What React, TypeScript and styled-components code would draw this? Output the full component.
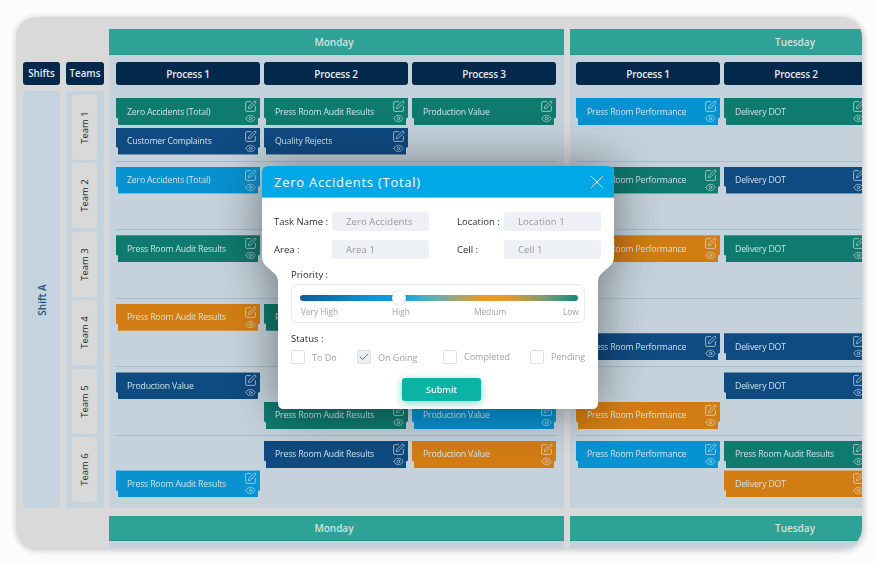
import React from 'react';
import styled, { createGlobalStyle } from 'styled-components';
import { Check, Eye, SquarePen, X } from 'lucide-react';

const GlobalStyle = createGlobalStyle`
  html, body {
    margin: 0;
    background: #fcfcfc;
    font-family: 'Open Sans', 'Noto Sans', sans-serif;
  }
`;

type Tone = 'teal' | 'navy' | 'blue' | 'orange';

const tones: Record<Tone, string> = {
  teal: '#0f7a6e',
  navy: '#0f4a80',
  blue: '#0792d0',
  orange: '#d27d14',
};

const Page = styled.div`
  width: 878px;
  height: 566px;
  padding: 17px 0 0 16px;
  box-sizing: border-box;
  overflow: hidden;
`;

const Frame = styled.div`
  position: relative;
  width: 846px;
  height: 531px;
  background: #d9d9d9;
  border-radius: 20px;
  box-shadow: 0 0 5px 2px rgba(0, 0, 0, 0.08), 2px 3px 7px rgba(0, 0, 0, 0.14);
`;

const Clip = styled.div`
  position: absolute;
  inset: 0;
  display: flex;
  gap: 5px;
  padding: 12px 0 0 7px;
  border-radius: 20px;
  overflow: hidden;
`;

const Sidebar = styled.div`
  flex: none;
  display: flex;
  gap: 6px;
  padding-top: 33px;
`;

const SideColumn = styled.div<{ $width: number }>`
  width: ${p => p.$width}px;
  display: flex;
  flex-direction: column;
  gap: 6px;
`;

const SideHead = styled.div`
  height: 23px;
  display: flex;
  align-items: center;
  justify-content: center;
  border-radius: 3px;
  background: #02284c;
  color: #e6ebef;
  font-size: 9.8px;
  font-weight: 600;
`;

const ShiftBody = styled.div`
  height: 417px;
  display: flex;
  align-items: center;
  justify-content: center;
  border-radius: 3px;
  background: #c5d3de;
  color: #1d4f7c;
  font-size: 10px;
  font-weight: 600;
`;

const Vertical = styled.span`
  transform: rotate(-90deg);
  white-space: nowrap;
`;

const TeamBody = styled.div`
  height: 417px;
  display: flex;
  flex-direction: column;
  gap: 3.4px;
  padding: 4px 7px 0 6px;
  box-sizing: border-box;
  border-radius: 3px;
  background: #c5d3de;
`;

const TeamBox = styled.div`
  height: 65px;
  flex: none;
  display: flex;
  align-items: center;
  justify-content: center;
  border-radius: 3px;
  background: #d9d9d9;
  color: #262626;
  font-size: 9.5px;
`;

const Days = styled.div`
  display: flex;
  gap: 6px;
`;

const DayColumn = styled.div`
  width: 455px;
  flex: none;
  display: flex;
  flex-direction: column;
`;

const DayHead = styled.div<{ $height: number }>`
  height: ${p => p.$height}px;
  flex: none;
  display: flex;
  align-items: center;
  justify-content: center;
  padding-right: 5px;
  background: #2ea297;
  border-bottom: 1px solid #2a9389;
  box-sizing: border-box;
  color: #cfe3df;
  font-size: 10px;
  font-weight: 600;
`;

const DayBody = styled.div<{ $inset: number }>`
  height: 453px;
  flex: none;
  padding: 7px 8px 0 ${p => p.$inset}px;
  box-sizing: border-box;
  background: #c5d2db;
`;

const DayFootGap = styled.div`
  height: 8px;
  flex: none;
`;

const DaySliver = styled.div`
  height: 8px;
  flex: none;
  background: #c5d2db;
`;

const Cols = styled.div`
  display: grid;
  grid-template-columns: repeat(3, 144px);
  column-gap: 4px;
`;

const ProcessHead = styled.div`
  height: 23px;
  display: flex;
  align-items: center;
  justify-content: center;
  border-radius: 3px;
  background: #02284c;
  color: #e6ebef;
  font-size: 10px;
  font-weight: 600;
  letter-spacing: -0.2px;
`;

const Rows = styled.div`
  margin-top: 8px;
`;

const Row = styled(Cols)`
  height: 68.6px;
  box-sizing: border-box;
  padding-top: 5px;
  border-bottom: 1px solid #a9bccb;

  &:last-child {
    border-bottom: none;
  }
`;

const Cell = styled.div`
  display: flex;
  flex-direction: column;
  gap: 2.5px;
`;

const Slot = styled.div`
  height: 27px;
  flex: none;
`;

const CardEdge = styled.div`
  height: 27px;
  flex: none;
  filter: drop-shadow(0 0 0.6px #e4eaee);
`;

const CardBody = styled.div<{ $tone: Tone }>`
  height: 100%;
  display: flex;
  align-items: center;
  justify-content: space-between;
  padding: 0 3px 0 11px;
  background: ${p => tones[p.$tone]};
  clip-path: polygon(0 0, 100% 0, 100% 72%, calc(100% - 2px) 76%, calc(100% - 2px) 100%, 2px 100%, 2px 76%, 0 72%);
  color: #cfe2ea;
  font-size: 8.7px;
  letter-spacing: -0.17px;
`;

const CardIcons = styled.div`
  display: flex;
  flex-direction: column;
  align-items: center;
  margin-top: 1px;
  color: #d5e3ea;
`;

const ModalShadow = styled.div`
  position: absolute;
  left: 246px;
  top: 149px;
  width: 352px;
  height: 243px;
  filter: drop-shadow(0 0 24px rgba(0, 0, 0, 0.45));
`;

const Modal = styled.div`
  height: 100%;
  display: flex;
  flex-direction: column;
  background: #fff;
  clip-path: path('M6 0 H346 Q352 0 352 6 V91 Q352 96 348 100 L339 108 Q336 111 336 116 V237 Q336 243 330 243 H22 Q16 243 16 237 V116 Q16 111 13 108 L4 100 Q0 96 0 91 V6 Q0 0 6 0 Z');
`;

const ModalHead = styled.div`
  height: 32px;
  flex: none;
  display: flex;
  align-items: center;
  justify-content: space-between;
  padding: 0 6px 0 12px;
  background: #00a8e8;
  border-bottom: 1px solid #5cc9f0;
  box-sizing: border-box;
  color: #fff;
  font-size: 13px;
  letter-spacing: 0.75px;
`;

const Fields = styled.div`
  display: grid;
  grid-template-columns: 58px 97px 28px 47px 97px;
  grid-auto-rows: 19px;
  row-gap: 9px;
  align-items: center;
  margin-top: 14px;
  padding-left: 12px;
`;

const FieldLabel = styled.span`
  color: #2b2b2b;
  font-size: 9.5px;
  white-space: nowrap;
`;

const FieldInput = styled.div`
  height: 19px;
  display: flex;
  align-items: center;
  padding: 0 0 1px 14px;
  box-sizing: border-box;
  border-radius: 3px;
  background: #edf0f5;
  color: #999;
  font-size: 9.5px;
  letter-spacing: 0.1px;
`;

const Lower = styled.div`
  padding: 0 29px;
`;

const SectionLabel = styled.div<{ $top: number }>`
  margin-top: ${p => p.$top}px;
  color: #2b2b2b;
  font-size: 9.5px;
  line-height: 13px;
`;

const PriorityBox = styled.div`
  margin-top: 3px;
  height: 39px;
  padding: 10px 6px 0 8px;
  box-sizing: border-box;
  border: 1px solid #e7e9ec;
  border-radius: 6px;
`;

const Track = styled.div`
  position: relative;
  height: 6px;
  border-radius: 3px;
  background: linear-gradient(90deg, #0d5a98 0%, #0a8fd0 22%, #0ba3e6 36%, #4fb0c4 46%, #9fa57a 56%, #ee9a22 66%, #e99a26 74%, #7d9c72 88%, #128a7c 100%);
`;

const Thumb = styled.div`
  position: absolute;
  left: 92px;
  top: -4px;
  width: 14px;
  height: 14px;
  border-radius: 50%;
  background: #fff;
  box-shadow: 0 0 2px rgba(0, 0, 0, 0.25);
`;

const Scale = styled.div`
  display: grid;
  grid-template-columns: 91px 82px 89px auto;
  margin-top: 5px;
  padding-left: 1px;
  color: #a3a3a3;
  font-size: 8.3px;
  line-height: 12px;
`;

const StatusRow = styled.div`
  display: grid;
  grid-template-columns: 66px 86px 87px auto;
  margin-top: 5px;
`;

const StatusItem = styled.div<{ $raised?: boolean }>`
  display: flex;
  align-items: center;
  gap: 7px;
  margin-top: ${p => (p.$raised ? -1 : 0)}px;
  color: #a3a3a3;
  font-size: 9px;
  white-space: nowrap;
`;

const Box = styled.span<{ $checked?: boolean }>`
  width: 14px;
  height: 14px;
  flex: none;
  display: flex;
  align-items: center;
  justify-content: center;
  box-sizing: border-box;
  border: 1px solid #dcdfe3;
  border-radius: 2px;
  background: ${p => (p.$checked ? '#edf1f6' : '#fff')};
  color: #1a6fae;
`;

const SubmitRow = styled.div`
  display: flex;
  justify-content: center;
  margin-top: 14px;
`;

const Submit = styled.button`
  width: 79px;
  height: 23px;
  padding: 0;
  margin-left: 7px;
  border: none;
  border-radius: 3px;
  background: #0bb3a4;
  box-shadow: 0 2px 8px rgba(11, 179, 164, 0.55);
  color: #fff;
  font-family: inherit;
  font-size: 9px;
  font-weight: 600;
`;

type CardData = [string, Tone] | null;

const Z = 'Zero Accidents (Total)';
const A = 'Press Room Audit Results';
const V = 'Production Value';
const P = 'Press Room Performance';
const D = 'Delivery DOT';

const monday: CardData[][][] = [
  [[[Z, 'teal'], ['Customer Complaints', 'navy']], [[A, 'teal'], ['Quality Rejects', 'navy']], [[V, 'teal']]],
  [[[Z, 'blue']], [], []],
  [[[A, 'teal']], [], []],
  [[[A, 'orange']], [[A, 'teal']], []],
  [[[V, 'navy']], [null, [A, 'teal']], [null, [V, 'blue']]],
  [[null, [A, 'blue']], [[A, 'navy']], [[V, 'orange']]],
];

const tuesday: CardData[][][] = [
  [[[P, 'blue']], [[D, 'teal']], []],
  [[[P, 'teal']], [[D, 'navy']], []],
  [[[P, 'orange']], [[D, 'teal']], []],
  [[null, [P, 'navy']], [null, [D, 'navy']], []],
  [[null, [P, 'orange']], [[D, 'navy']], []],
  [[[P, 'blue']], [[A, 'teal'], [D, 'orange']], []],
];

const Card = ({ title, tone }: { title: string; tone: Tone }) => (
  <CardEdge>
    <CardBody $tone={tone}>
      <span>{title}</span>
      <CardIcons>
        <SquarePen size={13} strokeWidth={1.3} />
        <Eye size={11} strokeWidth={1.3} />
      </CardIcons>
    </CardBody>
  </CardEdge>
);

interface DayProps {
  name: string;
  inset: number;
  processes: string[];
  rows: CardData[][][];
}

const Day = ({ name, inset, processes, rows }: DayProps) => (
  <DayColumn>
    <DayHead $height={26}>{name}</DayHead>
    <DayBody $inset={inset}>
      <Cols>
        {processes.map(p => (
          <ProcessHead key={p}>{p}</ProcessHead>
        ))}
      </Cols>
      <Rows>
        {rows.map((row, r) => (
          <Row key={r}>
            {row.map((cell, c) => (
              <Cell key={c}>
                {cell.map((card, i) =>
                  card ? <Card key={i} title={card[0]} tone={card[1]} /> : <Slot key={i} />
                )}
              </Cell>
            ))}
          </Row>
        ))}
      </Rows>
    </DayBody>
    <DayFootGap />
    <DayHead $height={25}>{name}</DayHead>
    <DaySliver />
  </DayColumn>
);

const statuses = [
  { label: 'To Do' },
  { label: 'On Going', checked: true },
  { label: 'Completed', raised: true },
  { label: 'Pending', raised: true },
];

export default function App() {
  return (
    <Page>
      <GlobalStyle />
      <Frame>
        <Clip>
          <Sidebar>
            <SideColumn $width={37}>
              <SideHead>Shifts</SideHead>
              <ShiftBody>
                <Vertical>Shift A</Vertical>
              </ShiftBody>
            </SideColumn>
            <SideColumn $width={38}>
              <SideHead>Teams</SideHead>
              <TeamBody>
                {[1, 2, 3, 4, 5, 6].map(n => (
                  <TeamBox key={n}>
                    <Vertical>Team {n}</Vertical>
                  </TeamBox>
                ))}
              </TeamBody>
            </SideColumn>
          </Sidebar>
          <Days>
            <Day name="Monday" inset={7} processes={['Process 1', 'Process 2', 'Process 3']} rows={monday} />
            <Day name="Tuesday" inset={6} processes={['Process 1', 'Process 2']} rows={tuesday} />
          </Days>
        </Clip>
        <ModalShadow>
          <Modal>
            <ModalHead>
              <span>Zero Accidents (Total)</span>
              <X size={22} strokeWidth={1} />
            </ModalHead>
            <Fields>
              <FieldLabel>Task Name :</FieldLabel>
              <FieldInput>Zero Accidents</FieldInput>
              <span />
              <FieldLabel>Location :</FieldLabel>
              <FieldInput>Location 1</FieldInput>
              <FieldLabel>Area :</FieldLabel>
              <FieldInput>Area 1</FieldInput>
              <span />
              <FieldLabel>Cell :</FieldLabel>
              <FieldInput>Cell 1</FieldInput>
            </Fields>
            <Lower>
              <SectionLabel $top={9}>Priority :</SectionLabel>
              <PriorityBox>
                <Track>
                  <Thumb />
                </Track>
                <Scale>
                  <span>Very High</span>
                  <span>High</span>
                  <span>Medium</span>
                  <span>Low</span>
                </Scale>
              </PriorityBox>
              <SectionLabel $top={9}>Status :</SectionLabel>
              <StatusRow>
                {statuses.map(s => (
                  <StatusItem key={s.label} $raised={s.raised}>
                    <Box $checked={s.checked}>
                      {s.checked && <Check size={12} strokeWidth={1.8} />}
                    </Box>
                    {s.label}
                  </StatusItem>
                ))}
              </StatusRow>
              <SubmitRow>
                <Submit>Submit</Submit>
              </SubmitRow>
            </Lower>
          </Modal>
        </ModalShadow>
      </Frame>
    </Page>
  );
}
